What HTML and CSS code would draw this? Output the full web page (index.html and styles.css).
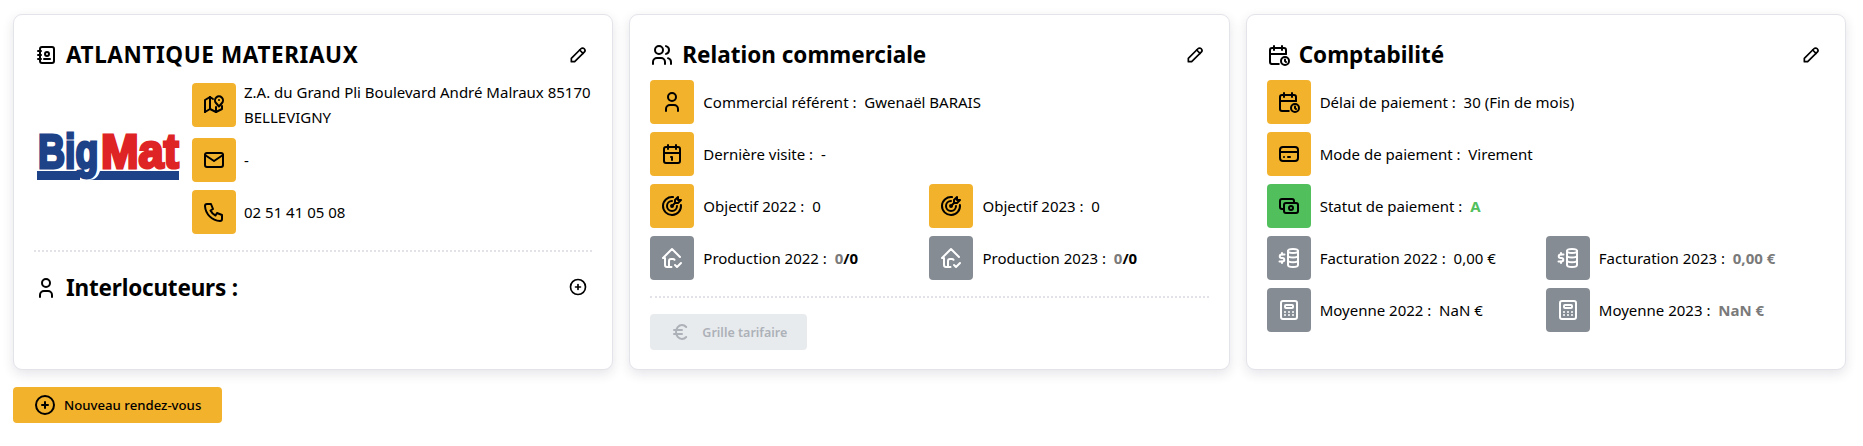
FILE: index.html
```html
<!DOCTYPE html>
<html lang="fr">
<head>
    <meta charset="UTF-8">
    <title>Fiche client</title>
    <link rel="stylesheet" href="styles.css">
</head>
<body>
    <svg class="defs" width="0" height="0" aria-hidden="true">
        <symbol id="i-book" viewBox="0 0 24 24"><path d="M20 6v12a2 2 0 0 1 -2 2h-10a2 2 0 0 1 -2 -2v-12a2 2 0 0 1 2 -2h10a2 2 0 0 1 2 2z"/><path d="M10 16h6"/><path d="M11 11a2 2 0 1 0 4 0a2 2 0 1 0 -4 0"/><path d="M4 8h3"/><path d="M4 12h3"/><path d="M4 16h3"/></symbol>
        <symbol id="i-pen" viewBox="0 0 24 24"><path d="M4 20v-4l11.500 -11.500a2.500 2.500 0 0 1 4 4l-11.500 11.500z"/><path d="M14 6l4 4"/></symbol>
        <symbol id="i-map" viewBox="0 0 24 24"><path d="M3 19v-12l5 -3l3 2"/><path d="M3 19l5 -3l6 3l6 -3v-3"/><path d="M8 4v12"/><path d="M14 14v5"/><path d="M20 10a4 4 0 1 0 -6 0l3 3.500z"/><path d="M17 7v.01"/></symbol>
        <symbol id="i-mail" viewBox="0 0 24 24"><path d="M3 7a2 2 0 0 1 2 -2h14a2 2 0 0 1 2 2v10a2 2 0 0 1 -2 2h-14a2 2 0 0 1 -2 -2v-10z"/><path d="M3 7l9 6l9 -6"/></symbol>
        <symbol id="i-phone" viewBox="0 0 24 24"><path d="M5 4h4l2 5l-2.500 1.500a11 11 0 0 0 5 5l1.500 -2.500l5 2v4a2 2 0 0 1 -2 2a16 16 0 0 1 -15 -15a2 2 0 0 1 2 -2"/></symbol>
        <symbol id="i-user" viewBox="0 0 24 24"><path d="M8 7a4 4 0 1 0 8 0a4 4 0 0 0 -8 0"/><path d="M6 21v-2a4 4 0 0 1 4 -4h4a4 4 0 0 1 4 4v2"/></symbol>
        <symbol id="i-users" viewBox="0 0 24 24"><path d="M5 7a4 4 0 1 0 8 0a4 4 0 1 0 -8 0"/><path d="M3 21v-2a4 4 0 0 1 4 -4h4a4 4 0 0 1 4 4v2"/><path d="M16 3.130a4 4 0 0 1 0 7.750"/><path d="M21 21v-2a4 4 0 0 0 -3 -3.850"/></symbol>
        <symbol id="i-plus" viewBox="0 0 24 24"><path d="M3 12a9 9 0 1 0 18 0a9 9 0 0 0 -18 0"/><path d="M9 12h6"/><path d="M12 9v6"/></symbol>
        <symbol id="i-cal" viewBox="0 0 24 24"><path d="M4 7a2 2 0 0 1 2 -2h12a2 2 0 0 1 2 2v12a2 2 0 0 1 -2 2h-12a2 2 0 0 1 -2 -2z"/><path d="M16 3v4"/><path d="M8 3v4"/><path d="M4 11h16"/><path d="M11 15h1v3"/></symbol>
        <symbol id="i-target" viewBox="0 0 24 24"><path d="M11 12a1 1 0 1 0 2 0a1 1 0 1 0 -2 0"/><path d="M12 7a5 5 0 1 0 5 5"/><path d="M13 3.055a9 9 0 1 0 7.941 7.945"/><path d="M15 6v3h3l3 -3h-3v-3z"/><path d="M15 9l-3 3"/></symbol>
        <symbol id="i-home" viewBox="0 0 24 24"><path d="M9 21v-6a2 2 0 0 1 2 -2h2c.645 0 1.218 .305 1.584 .78"/><path d="M20 11l-8 -8l-9 9h2v7a2 2 0 0 0 2 2h4.500"/><path d="M15 19l2 2l4 -4"/></symbol>
        <symbol id="i-caltime" viewBox="0 0 24 24"><path d="M11.795 21h-6.795a2 2 0 0 1 -2 -2v-12a2 2 0 0 1 2 -2h12a2 2 0 0 1 2 2v4"/><path d="M14 18a4 4 0 1 0 8 0a4 4 0 1 0 -8 0"/><path d="M15 3v4"/><path d="M7 3v4"/><path d="M3 11h16"/><path d="M18 16.496v1.504l1 1"/></symbol>
        <symbol id="i-card" viewBox="0 0 24 24"><path d="M3 8a3 3 0 0 1 3 -3h12a3 3 0 0 1 3 3v8a3 3 0 0 1 -3 3h-12a3 3 0 0 1 -3 -3z"/><path d="M3 10h18"/><path d="M7 15h.01"/><path d="M11 15h2"/></symbol>
        <symbol id="i-cash" viewBox="0 0 24 24"><path d="M7 11a2 2 0 0 1 2 -2h10a2 2 0 0 1 2 2v6a2 2 0 0 1 -2 2h-10a2 2 0 0 1 -2 -2z"/><path d="M12 14a2 2 0 1 0 4 0a2 2 0 1 0 -4 0"/><path d="M17 9v-2a2 2 0 0 0 -2 -2h-10a2 2 0 0 0 -2 2v6a2 2 0 0 0 2 2h2"/></symbol>
        <symbol id="i-coins" viewBox="0 0 24 24"><path d="M11 5c0 1.200 2.200 2 5 2s5 -.8 5 -2s-2.200 -2 -5 -2s-5 .8 -5 2"/><path d="M11 5v14c0 1.200 2.200 2 5 2s5 -.8 5 -2v-14"/><path d="M11 9.500c0 1.200 2.200 2 5 2s5 -.8 5 -2"/><path d="M11 14.200c0 1.200 2.200 2 5 2s5 -.8 5 -2"/><path d="M7.500 8.500h-3a1.500 1.500 0 0 0 0 3.500h1a1.500 1.500 0 0 1 0 3.500h-3"/><path d="M5 7v1.500m0 7v1.500"/></symbol>
        <symbol id="i-calc" viewBox="0 0 24 24"><path d="M4 5a2 2 0 0 1 2 -2h12a2 2 0 0 1 2 2v14a2 2 0 0 1 -2 2h-12a2 2 0 0 1 -2 -2z"/><path d="M8 8a1 1 0 0 1 1 -1h6a1 1 0 0 1 1 1v1a1 1 0 0 1 -1 1h-6a1 1 0 0 1 -1 -1z"/><path d="M8 14v.01"/><path d="M12 14v.01"/><path d="M16 14v.01"/><path d="M8 17v.01"/><path d="M12 17v.01"/><path d="M16 17v.01"/></symbol>
        <symbol id="i-euro" viewBox="0 0 24 24"><path d="M17.200 7a6 7 0 1 0 0 10"/><path d="M13 10h-8m0 4h8"/></symbol>
    </svg>

    <main class="cards">
        <section class="card">
            <header class="card-head">
                <h2 class="title-caps"><svg class="icon"><use href="#i-book"/></svg>ATLANTIQUE MATERIAUX</h2>
                <svg class="icon-sm"><use href="#i-pen"/></svg>
            </header>
            <div class="client">
                <svg class="logo" viewBox="0 -8 144 64" role="img" aria-label="BigMat">
                    <text class="logo-blue" transform="translate(1 35) scale(0.78 1)">Big</text>
                    <text class="logo-red" transform="translate(64 35) scale(0.94 1)">Mat</text>
                    <path class="logo-bar" d="M0 38h43v9h-43z"/>
                    <path class="logo-bar" d="M45 47h7c6 0 9 -3 11 -9h79v9h-97z"/>
                </svg>
                <div class="client-info">
                    <div class="row row-tall"><span class="tile"><svg><use href="#i-map"/></svg></span><span>Z.A. du Grand Pli Boulevard André Malraux 85170 BELLEVIGNY</span></div>
                    <div class="row"><span class="tile"><svg><use href="#i-mail"/></svg></span><span>-</span></div>
                    <div class="row"><span class="tile"><svg><use href="#i-phone"/></svg></span><span>02 51 41 05 08</span></div>
                </div>
            </div>
            <hr class="sep">
            <header class="card-head contact-head">
                <h2><svg class="icon"><use href="#i-user"/></svg>Interlocuteurs :</h2>
                <svg class="icon-sm"><use href="#i-plus"/></svg>
            </header>
        </section>

        <section class="card">
            <header class="card-head">
                <h2><svg class="icon"><use href="#i-users"/></svg>Relation commerciale</h2>
                <svg class="icon-sm"><use href="#i-pen"/></svg>
            </header>
            <div class="rows">
                <div class="row row-full"><span class="tile"><svg><use href="#i-user"/></svg></span><span>Commercial référent :&nbsp; Gwenaël BARAIS</span></div>
                <div class="row row-full"><span class="tile"><svg><use href="#i-cal"/></svg></span><span>Dernière visite :&nbsp; -</span></div>
                <div class="row"><span class="tile"><svg><use href="#i-target"/></svg></span><span>Objectif 2022 :&nbsp; 0</span></div>
                <div class="row"><span class="tile"><svg><use href="#i-target"/></svg></span><span>Objectif 2023 :&nbsp; 0</span></div>
                <div class="row"><span class="tile tile-grey"><svg><use href="#i-home"/></svg></span><span>Production 2022 :&nbsp; <b class="muted">0</b><b>/0</b></span></div>
                <div class="row"><span class="tile tile-grey"><svg><use href="#i-home"/></svg></span><span>Production 2023 :&nbsp; <b class="muted">0</b><b>/0</b></span></div>
            </div>
            <hr class="sep">
            <button class="btn-tarif" type="button" disabled><svg><use href="#i-euro"/></svg>Grille tarifaire</button>
        </section>

        <section class="card">
            <header class="card-head">
                <h2><svg class="icon"><use href="#i-caltime"/></svg>Comptabilité</h2>
                <svg class="icon-sm"><use href="#i-pen"/></svg>
            </header>
            <div class="rows">
                <div class="row row-full"><span class="tile"><svg><use href="#i-caltime"/></svg></span><span>Délai de paiement :&nbsp; 30 (Fin de mois)</span></div>
                <div class="row row-full"><span class="tile"><svg><use href="#i-card"/></svg></span><span>Mode de paiement :&nbsp; Virement</span></div>
                <div class="row row-full"><span class="tile tile-green"><svg><use href="#i-cash"/></svg></span><span>Statut de paiement :&nbsp; <b class="ok">A</b></span></div>
                <div class="row"><span class="tile tile-grey"><svg><use href="#i-coins"/></svg></span><span>Facturation 2022 :&nbsp; 0,00 €</span></div>
                <div class="row"><span class="tile tile-grey"><svg><use href="#i-coins"/></svg></span><span>Facturation 2023 :&nbsp; <b class="muted">0,00 €</b></span></div>
                <div class="row"><span class="tile tile-grey"><svg><use href="#i-calc"/></svg></span><span>Moyenne 2022 :&nbsp; NaN €</span></div>
                <div class="row"><span class="tile tile-grey"><svg><use href="#i-calc"/></svg></span><span>Moyenne 2023 :&nbsp; <b class="muted">NaN €</b></span></div>
            </div>
        </section>
    </main>

    <button class="btn-new" type="button"><svg><use href="#i-plus"/></svg>Nouveau rendez-vous</button>
</body>
</html>
```

FILE: styles.css
```css
body {
    margin: 0;
    padding: 14px 17px 0 13px;
    background: #fff;
    color: #000;
    font-family: "Noto Sans", "Open Sans", sans-serif;
    font-size: 15px;
    line-height: 25px;
}
svg {
    fill: none;
    stroke: currentColor;
    stroke-width: 2;
    stroke-linecap: round;
    stroke-linejoin: round;
}
.defs {
    position: absolute;
}
.cards {
    display: grid;
    grid-template-columns: repeat(3, 1fr);
    gap: 16px;
}
.card {
    height: 356px;
    box-sizing: border-box;
    padding: 20px;
    background: #fff;
    border: 1px solid #e3e4ea;
    border-radius: 9px;
    box-shadow: 0 4px 12px rgba(40, 40, 70, 0.12);
}
.card-head {
    display: flex;
    justify-content: space-between;
    align-items: center;
    height: 39px;
    margin-bottom: 6px;
}
.card-head h2 {
    display: flex;
    align-items: center;
    gap: 8px;
    margin: 0;
    font-size: 22.5px;
    font-weight: 700;
}
.card-head .title-caps {
    letter-spacing: 0.6px;
}
.icon {
    width: 24px;
    height: 24px;
    flex: none;
}
.icon-sm {
    width: 20px;
    height: 20px;
    margin-right: 4px;
}
.client {
    display: flex;
    align-items: center;
}
.logo {
    flex: none;
    width: 144px;
    height: 64px;
    margin: 0 11px 0 3px;
    stroke: none;
}
.logo text {
    font-family: "Liberation Sans", sans-serif;
    font-weight: 700;
    font-size: 48px;
    stroke-width: 3;
    stroke-linejoin: miter;
}
.logo-blue {
    fill: #1e4288;
    stroke: #1e4288;
}
.logo-red {
    fill: #de2424;
    stroke: #de2424;
}
.logo-bar {
    fill: #1e4288;
}
.client-info {
    flex: 1;
    display: flex;
    flex-direction: column;
    gap: 8px;
}
.client-info .row {
    gap: 8px;
}
.rows {
    display: grid;
    grid-template-columns: 1fr 1fr;
    gap: 8px 0;
}
.row {
    display: flex;
    align-items: center;
    gap: 9px;
}
.row-full {
    grid-column: 1 / -1;
}
.tile {
    flex: none;
    display: flex;
    align-items: center;
    justify-content: center;
    width: 44px;
    height: 44px;
    border-radius: 4px;
    background: #f3b22c;
    color: #000;
}
.tile svg {
    width: 24px;
    height: 24px;
}
.tile-grey {
    background: #868c94;
    color: #fff;
}
.tile-green {
    background: #52bf5d;
}
b {
    font-weight: 700;
}
.muted {
    color: #7a7a7a;
}
.ok {
    color: #52bf5d;
}
.sep {
    height: 0;
    margin: 16px 0;
    border: 0;
    border-top: 2px dotted #e2e3e8;
}
.contact-head h2 {
    letter-spacing: -0.2px;
}
.contact-head .icon-sm {
    margin-bottom: 2px;
}
.btn-tarif,
.btn-new {
    display: flex;
    align-items: center;
    height: 36px;
    border: 0;
    border-radius: 4px;
    font-family: inherit;
    font-size: 12.5px;
    font-weight: 600;
    white-space: nowrap;
}
.btn-tarif {
    gap: 9px;
    width: 157px;
    padding: 0 19px;
    background: #e8ebee;
    color: #adb1b8;
}
.btn-tarif svg {
    width: 24px;
    height: 24px;
}
.btn-new {
    gap: 7px;
    width: 209px;
    margin-top: 17px;
    padding: 0 20px;
    background: #f3b22c;
    color: #000;
    font-size: 13.2px;
    font-weight: 500;
}
.btn-new svg {
    width: 24px;
    height: 24px;
}
```
